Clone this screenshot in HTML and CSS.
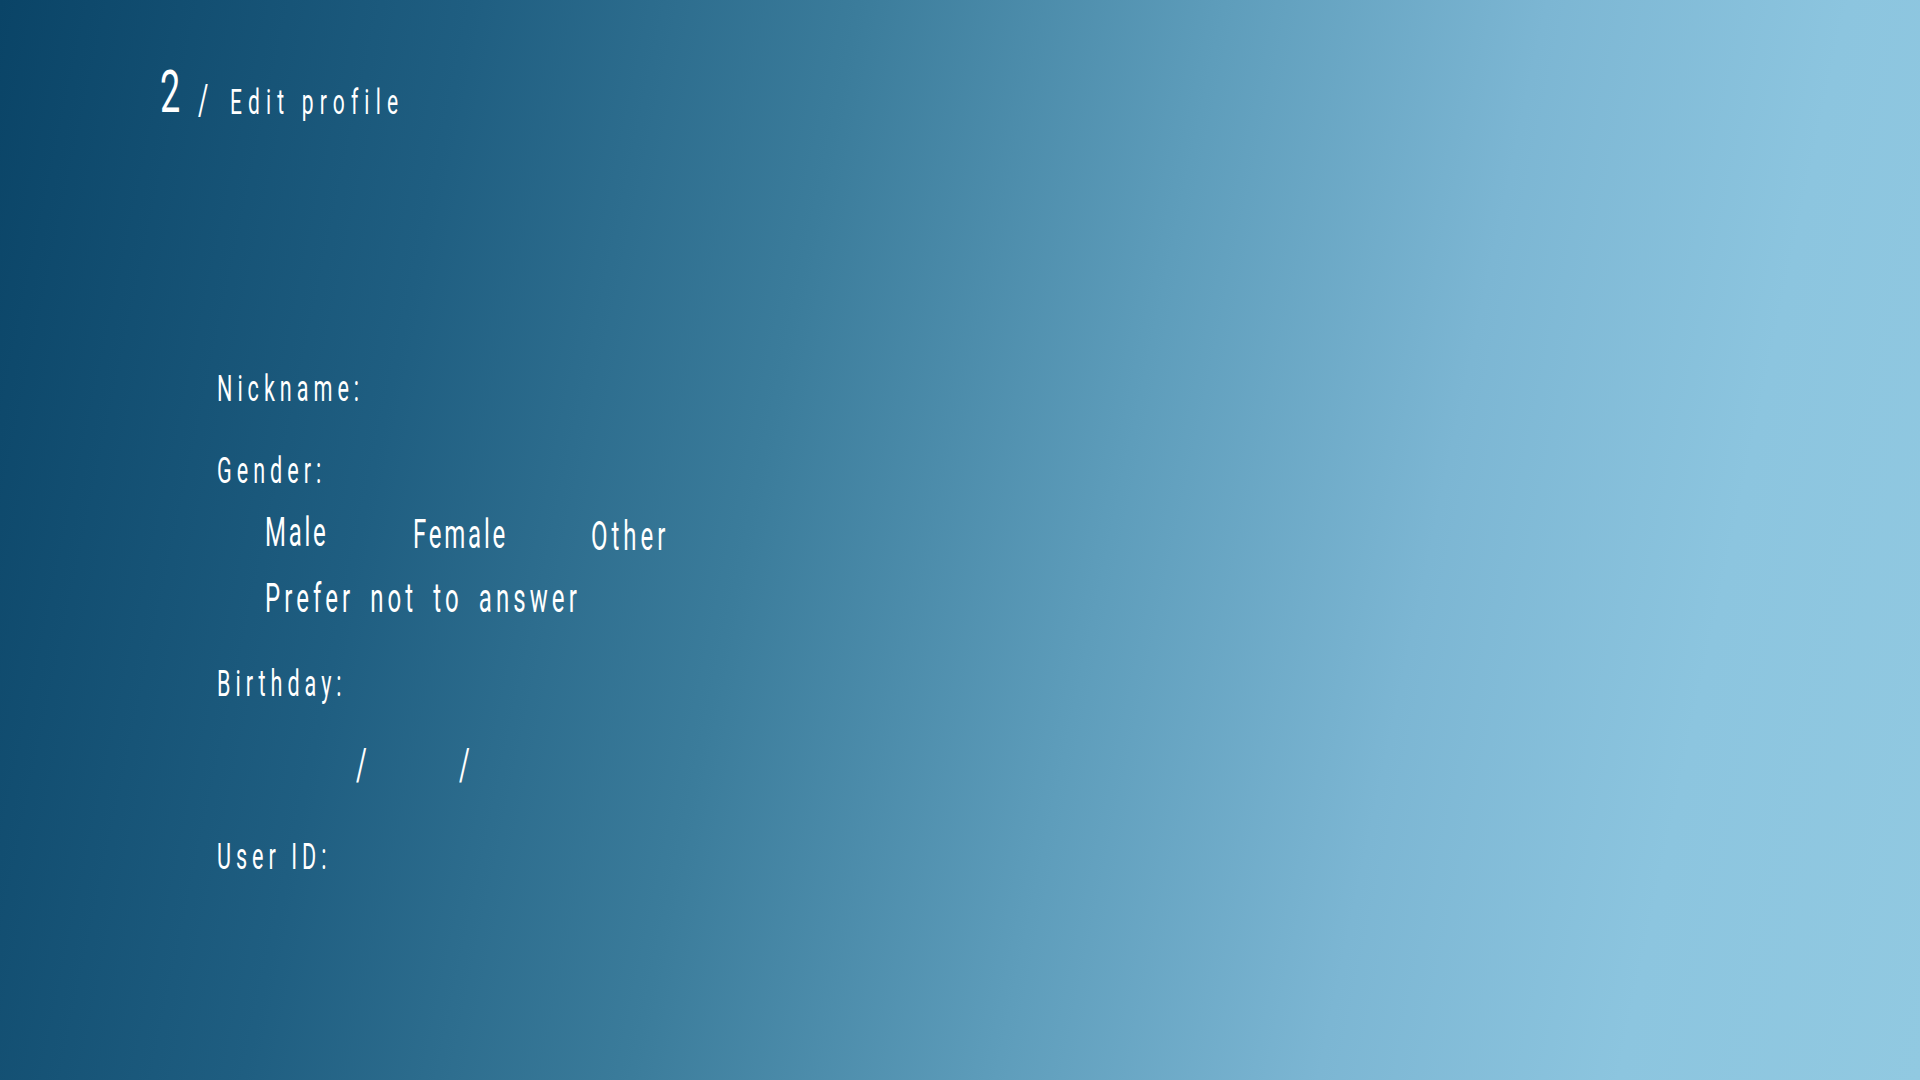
FILE: index.html
```html
<!DOCTYPE html>
<html lang="en">
<head>
<meta charset="utf-8">
<title>Edit profile</title>
<link rel="stylesheet" href="styles.css">
</head>
<body>
<main class="page">
  <header class="title">
    <span class="title-step"><span class="txt">2</span></span>
    <span class="title-sep"><span class="txt txt-low">/</span></span>
    <span class="title-text"><span class="txt txt-low">Edit profile</span></span>
  </header>

  <form class="profile-form">
    <div class="field field-nickname">
      <label class="label"><span class="txt">Nickname:</span></label>
    </div>

    <div class="field field-gender">
      <span class="label"><span class="txt">Gender:</span></span>
      <div class="options">
        <span class="option opt-male"><span class="txt">Male</span></span>
        <span class="option opt-female"><span class="txt">Female</span></span>
        <span class="option opt-other"><span class="txt">Other</span></span>
        <span class="option opt-none"><span class="txt">Prefer not to answer</span></span>
      </div>
    </div>

    <div class="field field-birthday">
      <span class="label"><span class="txt">Birthday:</span></span>
      <div class="date-row">
        <span class="date-part part-year"></span>
        <span class="date-sep"><span class="txt">/</span></span>
        <span class="date-part part-month"></span>
        <span class="date-sep"><span class="txt">/</span></span>
        <span class="date-part part-day"></span>
      </div>
    </div>

    <div class="field field-userid">
      <span class="label"><span class="txt">User ID:</span></span>
    </div>
  </form>
</main>
</body>
</html>
```

FILE: styles.css
```css
html, body {
  margin: 0;
  padding: 0;
  height: 100%;
}

body {
  background: linear-gradient(102deg, #0a4467 0%, #1f5e81 22%, #3b7c9b 40%, #5e9dbb 57%, #7cb6d3 72%, #8cc5df 86%, #91c9e1 100%);
  color: #ffffff;
  font-family: Roboto, "Liberation Sans", sans-serif;
  font-weight: 400;
  overflow: hidden;
}

.page {
  width: 1920px;
  height: 1080px;
  box-sizing: border-box;
  padding: 62px 0 0 160px;
}

/* condensed display look: narrow the glyphs horizontally */
.txt {
  display: inline-block;
  white-space: nowrap;
  transform: scaleX(0.6);
  transform-origin: 0 0;
}

.txt-low {
  transform: translateY(2px) scaleX(0.6);
}

.title {
  display: flex;
  align-items: baseline;
  line-height: 1;
  height: 60px;
}

.title-step {
  width: 38px;
  font-size: 60px;
}

.title-sep {
  width: 32px;
  font-size: 42px;
}

.title-text {
  font-size: 35px;
  letter-spacing: 10.3px;
}

.profile-form {
  margin: 249px 0 0 57px;
  display: flex;
  flex-direction: column;
  font-size: 36px;
  letter-spacing: 8.3px;
  line-height: 1;
}

.label {
  display: block;
  height: 36px;
}

.field-gender {
  margin-top: 46px;
}

.options {
  display: grid;
  grid-template-columns: 148px 178px auto;
  grid-auto-rows: 40px;
  row-gap: 26px;
  margin: 24px 0 0 48px;
  font-size: 40px;
  letter-spacing: 4.6px;
}

.opt-female .txt { transform: translateY(2px) scaleX(0.6); }
.opt-other .txt { transform: translateY(4px) scaleX(0.6); letter-spacing: 6.6px; }

.opt-none {
  grid-column: 1 / -1;
  letter-spacing: 6.8px;
  word-spacing: 10px;
}

.field-birthday {
  margin-top: 47px;
}

.date-row {
  display: flex;
  align-items: baseline;
  margin-top: 41px;
  font-size: 44px;
  height: 44px;
  letter-spacing: 0;
}

.date-part {
  display: inline-block;
}

.part-year { width: 139px; }
.part-month { width: 91px; }
.part-day { width: 91px; }

.date-sep {
  display: inline-block;
  width: 12px;
}

.field-userid {
  margin-top: 52px;
}
```
